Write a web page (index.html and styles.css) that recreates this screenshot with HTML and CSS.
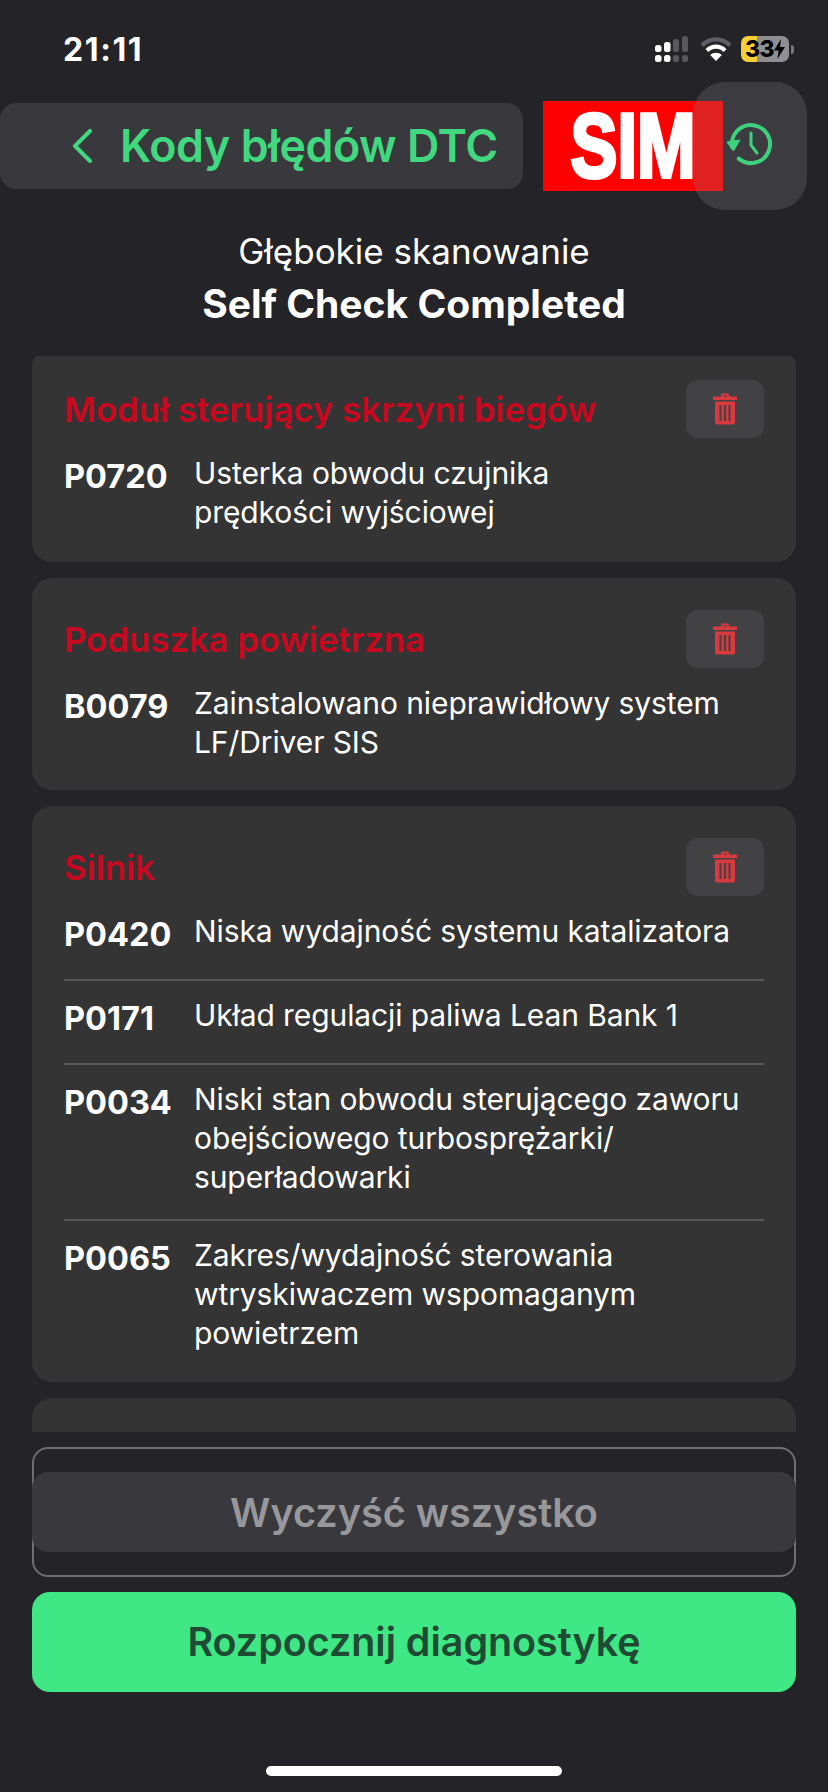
FILE: index.html
```html
<!DOCTYPE html>
<html lang="pl">
<head>
<meta charset="utf-8">
<title>Kody błędów DTC</title>
<link rel="stylesheet" href="styles.css">
</head>
<body>
<div class="app">
  <div class="status">
    <span class="time">21:11</span>
    <div class="status-icons">
      <svg class="signal" width="33" height="26" viewBox="0 0 33 26">
        <g fill="#fff"><rect x="0" y="9" width="6.5" height="7" rx="2.5"/><rect x="9" y="6" width="6.5" height="10" rx="2.5"/><rect x="0" y="19" width="6.5" height="7" rx="2.5"/><rect x="9" y="19" width="6.5" height="7" rx="2.5"/></g>
        <g fill="#58585c"><rect x="18" y="3" width="6" height="13" rx="2.5"/><rect x="27" y="0" width="6" height="16" rx="2.5"/><rect x="18" y="19" width="6" height="7" rx="2.5"/><rect x="27" y="19" width="6" height="7" rx="2.5"/></g>
      </svg>
      <svg class="wifi" width="32" height="26" viewBox="0 0 32 26">
        <path d="M2 9.5C9.5 1.2 22.5 1.2 30 9.5" fill="none" stroke="#5f5f63" stroke-width="4.2"/>
        <path d="M7 14.6C12 9.4 20 9.4 25 14.6" fill="none" stroke="#fff" stroke-width="4.2"/>
        <path d="M16 25L10.2 19C13.6 15.9 18.4 15.9 21.8 19Z" fill="#fff"/>
      </svg>
      <div class="battery">
        <span class="battery-text">33</span>
        <svg class="bolt" width="11" height="20" viewBox="0 0 11 20"><path d="M7 0L0 11.5H4.6L3.4 20L11 8H6Z" fill="#000"/></svg>
      </div>
      <span class="battery-tip"></span>
    </div>
  </div>

  <header class="topbar">
    <div class="back-pill">
      <svg class="chevron" width="22" height="34" viewBox="0 0 22 34"><path d="M19 2L4 17L19 32" fill="none" stroke="#41d880" stroke-width="4" stroke-linecap="round" stroke-linejoin="round"/></svg>
      <span class="page-title">Kody błędów DTC</span>
    </div>
    <div class="sim-logo"><span>SIM</span></div>
    <div class="history-btn">
      <svg width="50" height="46" viewBox="0 0 50 46">
        <path d="M7.3 26.3A19 19 0 1 1 13.8 37.6" fill="none" stroke="#3ed07c" stroke-width="4" stroke-linecap="round"/>
        <path d="M2 21L15 19L8.5 30Z" fill="#3ed07c" stroke="#3ed07c" stroke-width="1" stroke-linejoin="round"/>
        <path d="M26 12V24L32 32" fill="none" stroke="#3ed07c" stroke-width="3" stroke-linecap="round" stroke-linejoin="round"/>
      </svg>
    </div>
  </header>

  <div class="heading">
    <div class="heading-sub">Głębokie skanowanie</div>
    <div class="heading-main">Self Check Completed</div>
  </div>

  <main class="list">
    <div class="list-inner">
      <section class="card card-first">
        <div class="card-head">
          <h2 class="card-title">Moduł sterujący skrzyni biegów</h2>
          <div class="trash-btn"><svg width="24" height="32" viewBox="0 0 24 32"><use href="#trash"/></svg></div>
        </div>
        <div class="row">
          <span class="code">P0720</span>
          <span class="desc">Usterka obwodu czujnika<br>prędkości wyjściowej</span>
        </div>
      </section>
      <section class="card">
        <div class="card-head">
          <h2 class="card-title">Poduszka powietrzna</h2>
          <div class="trash-btn"><svg width="24" height="32" viewBox="0 0 24 32"><use href="#trash"/></svg></div>
        </div>
        <div class="row">
          <span class="code">B0079</span>
          <span class="desc">Zainstalowano nieprawidłowy system<br>LF/Driver SIS</span>
        </div>
      </section>
      <section class="card card-engine">
        <div class="card-head">
          <h2 class="card-title">Silnik</h2>
          <div class="trash-btn"><svg width="24" height="32" viewBox="0 0 24 32"><use href="#trash"/></svg></div>
        </div>
        <div class="row">
          <span class="code">P0420</span>
          <span class="desc">Niska wydajność systemu katalizatora</span>
        </div>
        <div class="row">
          <span class="code">P0171</span>
          <span class="desc">Układ regulacji paliwa Lean Bank 1</span>
        </div>
        <div class="row">
          <span class="code">P0034</span>
          <span class="desc">Niski stan obwodu sterującego zaworu<br>obejściowego turbosprężarki/<br>superładowarki</span>
        </div>
        <div class="row">
          <span class="code">P0065</span>
          <span class="desc">Zakres/wydajność sterowania<br>wtryskiwaczem wspomaganym<br>powietrzem</span>
        </div>
      </section>
      <section class="card card-empty"></section>
    </div>
  </main>

  <div class="actions">
    <div class="clear-outline">
      <div class="clear-btn">Wyczyść wszystko</div>
    </div>
    <div class="start-btn">Rozpocznij diagnostykę</div>
  </div>

  <div class="home-area"><span class="home-bar"></span></div>

  <svg class="defs" width="0" height="0">
    <defs>
      <g id="trash">
        <path d="M8 3.5V2.2C8 1 8.8 .5 9.8 .5H14.2C15.2 .5 16 1 16 2.2V3.5H23C23.6 3.5 24 3.9 24 4.5V7H0V4.5C0 3.9 .4 3.5 1 3.5ZM10 3.5H14V2.4H10Z" fill="#d93a3e" fill-rule="evenodd"/>
        <path d="M2 8.5H22V29.5C22 30.6 21.2 31.5 20 31.5H4C2.8 31.5 2 30.6 2 29.5ZM6.5 12V28H8.5V12ZM11 12V28H13V12ZM15.5 12V28H17.5V12Z" fill="#d93a3e" fill-rule="evenodd"/>
      </g>
    </defs>
  </svg>
</div>
</body>
</html>
```

FILE: styles.css
```css
* { box-sizing: border-box; }
html, body { margin: 0; padding: 0; }
body { background: #232328; font-family: Inter, "Liberation Sans", sans-serif; color: #fff; }
.app { position: relative; width: 828px; height: 1792px; overflow: hidden; display: flex; flex-direction: column; background: #232328; }

.status { height: 82px; display: flex; justify-content: space-between; align-items: flex-start; padding: 31px 34px 0 63px; flex: none; }
.time { font-size: 32px; line-height: 38px; font-weight: 700; letter-spacing: 1.6px; }
.status-icons { display: flex; align-items: center; margin-top: 5px; height: 26px; }
.signal { margin-right: 12px; display: block; }
.wifi { margin-right: 9px; display: block; }
.battery { position: relative; width: 48px; height: 26px; border-radius: 7px; display: flex; align-items: center; justify-content: center; gap: 0; color: #000; background: linear-gradient(to right, #f6cf36 0, #f6cf36 16px, #8f8f93 16px); }
.battery-text { font-size: 23px; font-weight: 800; line-height: 26px; letter-spacing: -0.5px; }
.bolt { display: block; }
.battery-tip { width: 3px; height: 9px; margin-left: 2px; background: #77777b; border-radius: 0 3px 3px 0; }

.topbar { height: 128px; flex: none; display: flex; align-items: center; justify-content: space-between; padding-right: 21px; }
.back-pill { width: 523px; height: 86px; background: #38383d; border-radius: 16px; display: flex; align-items: center; padding-left: 71px; gap: 27px; }
.chevron { display: block; flex: none; }
.page-title { color: #41d880; font-size: 44.7px; font-weight: 600; white-space: nowrap; letter-spacing: -0.4px; }
.sim-logo { position: absolute; left: 543px; top: 101px; width: 180px; height: 90px; background: #ff0000; display: flex; align-items: center; justify-content: center; }
.sim-logo span { font-family: "Liberation Sans", sans-serif; font-weight: 700; font-size: 90px; color: #fff; -webkit-text-stroke: 4px #fff; transform: scaleX(.78); line-height: 90px; }
.history-btn { position: relative; width: 114px; height: 128px; border-radius: 32px; background: rgba(130,130,135,.25); display: flex; align-items: center; justify-content: center; }
.history-btn svg { display: block; margin-bottom: 4px; }

.heading { height: 146px; flex: none; text-align: center; }
.heading-sub { font-size: 35px; line-height: 42px; margin-top: 20px; }
.heading-main { font-size: 39px; line-height: 46px; font-weight: 700; margin-top: 9px; }

.list { height: 1076px; flex: none; overflow: hidden; margin: 0 32px; }
.list-inner { margin-top: -8px; display: flex; flex-direction: column; gap: 16px; }
.card { background: #343434; border-radius: 20px; padding: 32px 32px 6px; }
.card-first { padding-bottom: 8px; }
.card-engine { padding-bottom: 7px; }
.card-empty { height: 120px; }
.card-head { display: flex; justify-content: space-between; align-items: center; height: 58px; margin-bottom: 16px; }
.card-title { margin: 0; color: #c8081f; font-size: 34.7px; font-weight: 600; line-height: 58px; white-space: nowrap; }
.trash-btn { width: 78px; height: 58px; border-radius: 12px; background: #424244; display: flex; align-items: center; justify-content: center; flex: none; }
.row { display: flex; padding-bottom: 22px; }
.row + .row { border-top: 2px solid #58585a; padding-top: 15px; }
.code { width: 130px; flex: none; font-size: 32.5px; font-weight: 700; line-height: 44px; padding-top: 1px; color: #fff; }
.desc { font-size: 30px; line-height: 39px; letter-spacing: -0.1px; color: #fff; }

.actions { flex: none; margin: 15px 32px 0; display: flex; flex-direction: column; gap: 15px; }
.clear-outline { height: 130px; border: 2px solid #6e6e73; border-radius: 16px; display: flex; align-items: center; }
.clear-btn { flex: 1; margin: 0 -2px; height: 80px; padding-top: 1px; border-radius: 16px; background: #38383d; display: flex; align-items: center; justify-content: center; color: #98989c; font-size: 39.6px; font-weight: 600; }
.start-btn { height: 100px; border-radius: 18px; background: #3fe884; display: flex; align-items: center; justify-content: center; color: #1f4a33; font-size: 39.4px; font-weight: 600; }

.home-area { flex: 1; display: flex; justify-content: center; padding-top: 74px; }
.home-bar { display: block; width: 296px; height: 10px; border-radius: 5px; background: #fff; }
.defs { position: absolute; }
```
